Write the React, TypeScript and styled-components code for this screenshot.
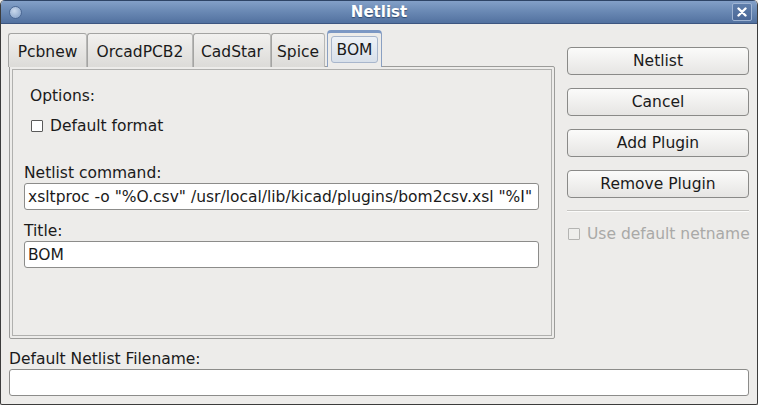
import * as React from 'react';
import styled, { createGlobalStyle } from 'styled-components';

const GlobalStyle = createGlobalStyle`
  html, body {
    margin: 0;
    padding: 0;
    background: #edecea;
  }
  body {
    font-family: 'DejaVu Sans', 'Liberation Sans', sans-serif;
    font-size: 15.5px;
    color: #1a1a1a;
  }
`;

const Window = styled.div`
  width: 758px;
  height: 405px;
  box-sizing: border-box;
  display: flex;
  flex-direction: column;
  background: #edecea;
  border: 1px solid #3c3c3c;
  border-top: none;
  border-radius: 5px 5px 2px 2px;
  overflow: hidden;
`;

const TitleBar = styled.div`
  height: 24px;
  flex-shrink: 0;
  display: flex;
  align-items: center;
  justify-content: center;
  position: relative;
  background: linear-gradient(#83a0c8 0%, #6b8ab5 45%, #52719f 100%);
  border-top: 1px solid #2e4466;
  border-bottom: 1px solid #3d5680;
  box-sizing: border-box;
  color: #ffffff;
  font-weight: bold;
  font-size: 15px;
  text-shadow: 0 1px 1px rgba(20, 40, 70, 0.6);
`;

const MenuDot = styled.span`
  position: absolute;
  left: 8px;
  top: 5px;
  width: 11px;
  height: 11px;
  border-radius: 50%;
  background: radial-gradient(circle at 40% 35%, #c9d8ec, #7f9cc4);
  border: 1px solid #4b6894;
`;

const CloseButton = styled.span`
  position: absolute;
  right: 5px;
  top: 2px;
  width: 20px;
  height: 18px;
  box-sizing: border-box;
  border: 1px solid #9fb4d3;
  border-radius: 2px;
  background: linear-gradient(#5f7eab, #4a6796);
  display: flex;
  align-items: center;
  justify-content: center;
`;

const Body = styled.div`
  flex: 1;
  display: flex;
  flex-direction: column;
  padding: 4px 8px 7px 7px;
`;

const MainRow = styled.div`
  display: flex;
  gap: 12px;
`;

const Notebook = styled.div`
  width: 547px;
  display: flex;
  flex-direction: column;
`;

const TabStrip = styled.div`
  display: flex;
  align-items: flex-end;
  height: 39px;
  position: relative;
  z-index: 1;
  margin-bottom: -1px;
`;

const Tab = styled.div<{ $w: number }>`
  width: ${p => p.$w}px;
  height: 34px;
  box-sizing: border-box;
  display: flex;
  align-items: center;
  justify-content: center;
  border: 1px solid #a4a4a2;
  border-bottom: none;
  border-right-color: #b8b8b6;
  border-radius: 3px 3px 0 0;
  background: linear-gradient(#f2f1ef, #dcdbd8);
  color: #1a1a1a;
  padding-top: 2px;
`;

const ActiveTab = styled.div`
  width: 55px;
  height: 37px;
  margin-left: 2px;
  box-sizing: border-box;
  padding: 3px 3px 4px 3px;
  border: 1px solid #8aa0c2;
  border-bottom: none;
  border-top: 3px solid #7c98c4;
  border-radius: 4px 4px 0 0;
  background: #edecea;
  display: flex;
`;

const ActiveInner = styled.div`
  flex: 1;
  display: flex;
  align-items: center;
  justify-content: center;
  border: 1px solid #a8b6cc;
  border-radius: 3px;
  background: linear-gradient(#eef2f7, #d8e0ea);
`;

const PanelOuter = styled.div`
  margin-left: 1px;
  height: 273px;
  box-sizing: border-box;
  border: 1px solid #9c9c9a;
  border-radius: 0 2px 2px 2px;
  padding: 2px;
  display: flex;
`;

const PanelInner = styled.div`
  flex: 1;
  border: 1px solid #b0b0ae;
  display: flex;
  flex-direction: column;
  padding: 15px 12px 0 11px;
`;

const Heading = styled.div`
  padding-left: 6px;
  height: 22px;
  line-height: 22px;
`;

const CheckRow = styled.label<{ $disabled?: boolean }>`
  display: flex;
  align-items: center;
  gap: 7px;
  height: 22px;
  white-space: nowrap;
  color: ${p => (p.$disabled ? '#a9a9a7' : '#1a1a1a')};
`;

const CheckBox = styled.span<{ $disabled?: boolean }>`
  width: 12px;
  height: 12px;
  flex-shrink: 0;
  box-sizing: border-box;
  border: 1px solid ${p => (p.$disabled ? '#b4b4b2' : '#5a5a5a')};
  background: ${p => (p.$disabled ? '#eeeeec' : '#ffffff')};
  border-radius: 1px;
`;

const FieldLabel = styled.div`
  height: 20px;
  line-height: 20px;
`;

const TextInput = styled.div<{ $mb?: number }>`
  height: 27px;
  box-sizing: border-box;
  border: 1px solid #8c8c8a;
  border-radius: 3px;
  background: #ffffff;
  padding: 0 3px;
  display: flex;
  align-items: center;
  white-space: nowrap;
  overflow: hidden;
  margin-bottom: ${p => p.$mb ?? 0}px;
`;

const Spacer = styled.div<{ $h: number }>`
  height: ${p => p.$h}px;
  flex-shrink: 0;
`;

const Side = styled.div`
  width: 182px;
  padding-top: 19px;
  display: flex;
  flex-direction: column;
`;

const Button = styled.div`
  height: 28px;
  box-sizing: border-box;
  border: 1px solid #8a8a88;
  border-radius: 4px;
  background: linear-gradient(#fbfbfa, #e6e5e3);
  display: flex;
  align-items: center;
  justify-content: center;
  margin-bottom: 13px;
`;

const Separator = styled.div`
  height: 0;
  border-top: 1px solid #c6c5c2;
  border-bottom: 1px solid #fbfbfa;
  margin: -1px 0 11px;
`;

const Footer = styled.div`
  margin-top: 10px;
  padding-left: 1px;
  display: flex;
  flex-direction: column;
`;

export default function App() {
  return (
    <>
      <GlobalStyle />
      <Window>
        <TitleBar>
          <MenuDot />
          Netlist
          <CloseButton>
            <svg width="10" height="10" viewBox="0 0 10 10">
              <path d="M1.5 1.5 L8.5 8.5 M8.5 1.5 L1.5 8.5" stroke="#ffffff" strokeWidth="2.4" strokeLinecap="round" />
            </svg>
          </CloseButton>
        </TitleBar>
        <Body>
          <MainRow>
            <Notebook>
              <TabStrip>
                <Tab $w={79}>Pcbnew</Tab>
                <Tab $w={106}>OrcadPCB2</Tab>
                <Tab $w={78}>CadStar</Tab>
                <Tab $w={54}>Spice</Tab>
                <ActiveTab>
                  <ActiveInner>BOM</ActiveInner>
                </ActiveTab>
              </TabStrip>
              <PanelOuter>
                <PanelInner>
                  <Heading>Options:</Heading>
                  <Spacer $h={8} />
                  <CheckRow style={{ paddingLeft: 7 }}>
                    <CheckBox />
                    Default format
                  </CheckRow>
                  <Spacer $h={26} />
                  <FieldLabel>Netlist command:</FieldLabel>
                  <TextInput $mb={11}>xsltproc -o "%O.csv" /usr/local/lib/kicad/plugins/bom2csv.xsl "%I"</TextInput>
                  <FieldLabel>Title:</FieldLabel>
                  <TextInput>BOM</TextInput>
                </PanelInner>
              </PanelOuter>
            </Notebook>
            <Side>
              <Button>Netlist</Button>
              <Button>Cancel</Button>
              <Button>Add Plugin</Button>
              <Button>Remove Plugin</Button>
              <Separator />
              <CheckRow $disabled style={{ paddingLeft: 1 }}>
                <CheckBox $disabled />
                Use default netname
              </CheckRow>
            </Side>
          </MainRow>
          <Footer>
            <FieldLabel>Default Netlist Filename:</FieldLabel>
            <TextInput />
          </Footer>
        </Body>
      </Window>
    </>
  );
}
